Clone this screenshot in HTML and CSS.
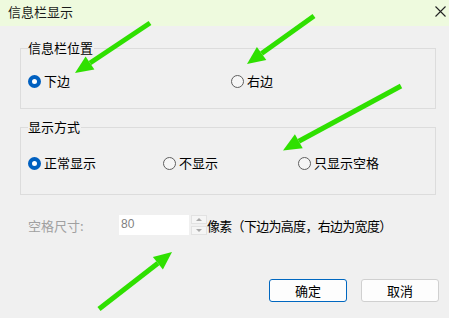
FILE: index.html
```html
<!DOCTYPE html>
<html lang="zh-CN">
<head>
    <meta charset="UTF-8">
    <title>信息栏显示</title>
    <link rel="stylesheet" href="styles.css">
</head>
<body>
    <div class="dialog">
        <div class="titlebar">
            <span class="title">信息栏显示</span>
            <svg class="close" width="11" height="11" viewBox="0 0 11 11">
                <path d="M0.5 0.5 L10.5 10.5 M10.5 0.5 L0.5 10.5" stroke="#222" stroke-width="1.1" fill="none"/>
            </svg>
        </div>

        <div class="content">
            <fieldset class="group group-pos">
                <legend>信息栏位置</legend>
                <div class="options">
                    <label class="opt opt-wide"><span class="radio checked"></span>下边</label>
                    <label class="opt"><span class="radio"></span>右边</label>
                </div>
            </fieldset>

            <fieldset class="group group-mode">
                <legend>显示方式</legend>
                <div class="options">
                    <label class="opt"><span class="radio checked"></span>正常显示</label>
                    <label class="opt"><span class="radio"></span>不显示</label>
                    <label class="opt"><span class="radio"></span>只显示空格</label>
                </div>
            </fieldset>

            <div class="size-row">
                <span class="size-label">空格尺寸:</span>
                <div class="input">80</div>
                <div class="spin">
                    <span class="spin-btn"><i class="tri up"></i></span>
                    <span class="spin-btn"><i class="tri down"></i></span>
                </div>
                <span class="size-hint">像素（下边为高度，右边为宽度）</span>
            </div>

            <div class="buttons">
                <button class="btn primary">确定</button>
                <button class="btn">取消</button>
            </div>
        </div>

        <!-- annotation arrows drawn over the dialog -->
        <svg class="arrows" width="449" height="318" viewBox="0 0 449 318">
            <g stroke="#2fe000" stroke-width="5" stroke-linecap="butt" fill="#2fe000">
                <line x1="150" y1="23" x2="90" y2="63"/>
                <polygon points="75,73 85.6,56.4 94.4,69.6" stroke="none"/>
                <line x1="314" y1="16" x2="261.6" y2="53.5"/>
                <polygon points="247,64 256.9,47 266.3,60" stroke="none"/>
                <line x1="401" y1="86" x2="298.8" y2="141.3"/>
                <polygon points="283,150.5 294.9,134.3 302.7,148.3" stroke="none"/>
                <line x1="99" y1="309" x2="157.9" y2="263.2"/>
                <polygon points="172,252 152.9,256.9 162.9,269.5" stroke="none"/>
            </g>
        </svg>
    </div>
</body>
</html>
```

FILE: styles.css
```css
body {
    margin: 0;
    padding: 0;
    font-family: "Noto Sans CJK SC", "Noto Sans", sans-serif;
    font-size: 13px;
    color: #000;
    background-color: #f0f0f0;
}

.dialog {
    position: relative;
    width: 449px;
    height: 318px;
    overflow: hidden;
    background-color: #f0f0f0;
}

.titlebar {
    height: 26px;
    display: flex;
    align-items: center;
    justify-content: space-between;
    padding: 0 3px 0 8px;
    background-color: #eefade;
}

.title {
    line-height: 16px;
    margin-top: -2px;
    color: #1a1a1a;
}

.close {
    margin-top: -4px;
}

.content {
    padding: 0 10px 0 20px;
}

.group {
    margin: 0 3px 0 0;
    padding: 0 0 0 7px;
    border: 1px solid #dcdcdc;
}

.group legend {
    padding: 0 1px 0 0;
    line-height: 16px;
}

.group-pos {
    margin-top: 14px;
}

.group-pos .options {
    padding: 16px 0 18px;
}

.group-mode {
    margin-top: 10px;
}

.group-mode .options {
    padding: 19px 0 22px;
}

.options {
    display: flex;
}

.opt {
    display: flex;
    align-items: center;
    width: 135px;
    height: 18px;
    line-height: 18px;
}

.opt-wide {
    width: 203px;
}

.radio {
    box-sizing: border-box;
    width: 13px;
    height: 13px;
    margin-right: 3px;
    border: 1px solid #5f5f5f;
    border-radius: 50%;
    background-color: #f6f6f6;
}

.radio.checked {
    border: 4px solid #0060c0;
    background-color: #fff;
}

.size-row {
    display: flex;
    align-items: center;
    height: 20px;
    margin-top: 20px;
    padding-left: 8px;
}

.size-label {
    width: 91px;
    color: #a0a0a0;
}

.input {
    box-sizing: border-box;
    width: 70px;
    height: 20px;
    padding: 0 2px;
    line-height: 18px;
    background-color: #fff;
    color: #7f7f7f;
    font-family: "Liberation Sans", sans-serif;
    font-size: 12px;
}

.spin {
    display: flex;
    flex-direction: column;
    justify-content: space-between;
    width: 16px;
    height: 20px;
    margin: 0 1px 0 2px;
}

.spin-btn {
    box-sizing: border-box;
    display: flex;
    align-items: center;
    justify-content: center;
    height: 9px;
    border: 1px solid #e2e2e2;
    background-color: #f5f5f5;
}

.tri {
    width: 0;
    height: 0;
    border-left: 3px solid transparent;
    border-right: 3px solid transparent;
}

.tri.up {
    border-bottom: 3px solid #a8a8a8;
}

.tri.down {
    border-top: 3px solid #a8a8a8;
}

.size-hint {
    margin-left: -1px;
    letter-spacing: -0.7px;
}

.buttons {
    display: flex;
    justify-content: flex-end;
    gap: 14px;
    margin-top: 44px;
}

.btn {
    box-sizing: border-box;
    width: 78px;
    height: 23px;
    padding: 0;
    font-family: inherit;
    font-size: 13px;
    color: #000;
    background-color: #fdfdfd;
    border: 1px solid #d0d0d0;
    border-radius: 3px;
}

.btn.primary {
    border-color: #0067c0;
}

.arrows {
    position: absolute;
    top: 0;
    left: 0;
    pointer-events: none;
}
```
